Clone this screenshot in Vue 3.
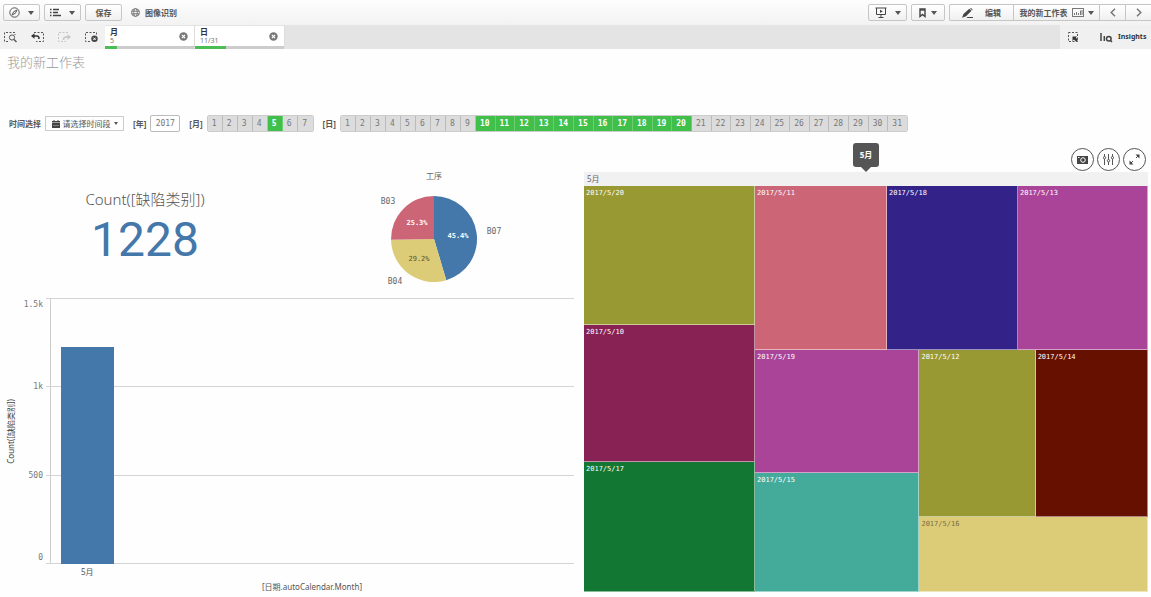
<script setup>
const months = [1, 2, 3, 4, 5, 6, 7]
const days = Array.from({ length: 31 }, (_, i) => i + 1)
const fields = [
  { name: '月', value: '5', share: 14 },
  { name: '日', value: '11/31', share: 35 },
]
const ticks = [
  { label: '1.5k', at: 100 },
  { label: '1k', at: 66.67 },
  { label: '500', at: 33.33 },
  { label: '0', at: 0 },
]
const barHeight = (1228 / 1500) * 100

const slices = [
  { name: 'B07', share: 45.4, color: '#4477aa', lx: 204, ly: 62, px: 168, py: 66, ink: '#fff', bold: true },
  { name: 'B04', share: 29.3, color: '#ddcc77', lx: 105, ly: 112, px: 129, py: 89, ink: '#5c5230', bold: false },
  { name: 'B03', share: 25.3, color: '#cc6677', lx: 98, ly: 32, px: 127, py: 53, ink: '#fff', bold: true },
]
const percent = { B07: '45.4%', B04: '29.2%', B03: '25.3%' }
const cx = 144
const cy = 67
const r = 43
let acc = 0
for (const s of slices) {
  const a0 = (acc / 100) * Math.PI * 2
  acc += s.share
  const a1 = (acc / 100) * Math.PI * 2
  const p = (a) => `${(cx + r * Math.sin(a)).toFixed(2)} ${(cy - r * Math.cos(a)).toFixed(2)}`
  s.d = `M${cx} ${cy}L${p(a0)}A${r} ${r} 0 0 1 ${p(a1)}Z`
}
</script>

<template>
  <div class="page">
    <header class="topbar">
      <button class="btn w-s" aria-label="导航">
        <svg width="11" height="11" viewBox="0 0 11 11" fill="none" stroke="#555"><circle cx="5.5" cy="5.5" r="4.7" /><path d="M8 3 6.3 6.3 3 8 4.7 4.7Z" /></svg>
        <i class="caret"></i>
      </button>
      <button class="btn w-s" aria-label="菜单">
        <svg width="11" height="9" viewBox="0 0 11 9" stroke="#444" stroke-width="1.3"><path d="M0 1.5H1.5M3 1.5H9M0 4.5H1.5M3 4.5H8M0 7.5H1.5M3 7.5H11" /></svg>
        <i class="caret"></i>
      </button>
      <button class="btn w-s">保存</button>
      <div class="app-name">
        <svg width="9" height="9" viewBox="0 0 9 9" fill="none" stroke="#777"><circle cx="4.5" cy="4.5" r="3.9" /><ellipse cx="4.5" cy="4.5" rx="1.8" ry="3.9" /><path d="M.5 3.2H8.5M.5 5.8H8.5" /></svg>
        <span>图像识别</span>
      </div>
      <div class="spacer"></div>
      <button class="btn w-m" aria-label="演示">
        <svg width="12" height="11" viewBox="0 0 12 11" fill="none" stroke="#444"><path d="M.5 1H11.5M1.5 1V7.5H10.5V1M6 7.5V10M3.5 10.5H8.5" /><path d="M5 2.7 7.8 4.3 5 6Z" fill="#444" stroke="none" /></svg>
        <i class="caret"></i>
      </button>
      <button class="btn w-b" aria-label="书签">
        <svg width="7" height="10" viewBox="0 0 7 10" fill="none" stroke="#444" stroke-width="1.4"><path d="M1 1H6V8.5L3.5 6.5 1 8.5Z" /><path d="M1 2H6" /></svg>
        <i class="caret"></i>
      </button>
      <div class="group">
        <button class="seg edit">
          <svg width="11" height="10" viewBox="0 0 11 10" fill="#444"><path d="M7.300 .8 9.500 2.800 4 8.300 0 9.800 1.500 6ZM8 .2 9 0 10.700 1.500 10.200 2.200ZM5.500 9H11V10H4.500Z" /></svg>
          <span>编辑</span>
        </button>
        <button class="seg sheet">
          <span>我的新工作表</span>
          <svg width="12" height="9" viewBox="0 0 12 9" fill="none" stroke="#777"><rect x=".5" y=".5" width="11" height="8" /><path d="M2.5 7V5M4.5 7V4M6.5 7V5M8.5 7V2.5M10 7V2" /></svg>
          <i class="caret"></i>
        </button>
        <button class="seg nav" aria-label="上一个"><svg width="6" height="9" viewBox="0 0 6 9" fill="none" stroke="#777" stroke-width="1.5"><path d="M5 .7 1.2 4.5 5 8.3" /></svg></button>
        <button class="seg nav" aria-label="下一个"><svg width="6" height="9" viewBox="0 0 6 9" fill="none" stroke="#777" stroke-width="1.5"><path d="M1 .7 4.8 4.5 1 8.3" /></svg></button>
      </div>
    </header>

    <section class="selbar">
      <div class="tools">
        <button class="tool" aria-label="智能搜索"><svg width="13" height="12" viewBox="0 0 13 12" fill="none" stroke="#555"><path d="M4 10.5H.5V1.500H11V4" stroke-dasharray="2 1.500" /><circle cx="8" cy="6.500" r="2.600" /><path d="M10 8.500 12.500 11" stroke-width="1.400" /></svg></button>
        <button class="tool" aria-label="后退"><svg width="13" height="12" viewBox="0 0 13 12" fill="none" stroke="#555"><path d="M3 1.500H12.500V10.500H5" stroke-dasharray="2 1.500" /><path d="M2.500 5H6Q8 5 8 8" stroke="#333" stroke-width="1.500" /><path d="M0 5 3.500 2.300V7.700Z" fill="#333" stroke="none" /></svg></button>
        <button class="tool off" aria-label="前进"><svg width="13" height="12" viewBox="0 0 13 12" fill="none" stroke="#777"><path d="M10 1.500H.5V10.500H8" stroke-dasharray="2 1.500" /><path d="M10.500 6H8Q5.500 6 5.500 9" stroke-width="1.400" /><path d="M13 6 9.500 3.300V8.700Z" fill="#777" stroke="none" /></svg></button>
        <button class="tool" aria-label="清除所有选择"><svg width="13" height="12" viewBox="0 0 13 12" fill="none" stroke="#555"><path d="M5 10.500H.5V1.500H11.500V4" stroke-dasharray="2 1.500" /><circle cx="9.500" cy="7.800" r="3.200" fill="#444" stroke="none" /><path d="M8.300 6.600 10.700 9M10.700 6.600 8.300 9" stroke="#fff" /></svg></button>
      </div>
      <div v-for="f in fields" :key="f.name" class="field">
        <div class="field-body">
          <div class="field-text"><b>{{ f.name }}</b><span>{{ f.value }}</span></div>
          <button class="clear" :aria-label="'清除 ' + f.name"><svg width="9" height="9" viewBox="0 0 9 9"><circle cx="4.500" cy="4.500" r="4.200" fill="#777" /><path d="M2.900 2.900 6.100 6.100M6.100 2.900 2.900 6.100" stroke="#fff" stroke-width="1.300" /></svg></button>
        </div>
        <div class="meter"><div :style="{ width: f.share + '%' }"></div></div>
      </div>
      <div class="spacer"></div>
      <div class="insights">
        <button class="tool" aria-label="选择工具"><svg width="11" height="11" viewBox="0 0 11 11" fill="none" stroke="#555"><rect x=".5" y=".5" width="9" height="9" stroke-dasharray="2 1.500" /><path d="M4.500 4.500H9L7.800 5.800 10 8 8 9.500 6 7.500 4.500 9Z" fill="#333" stroke="none" /></svg></button>
        <button class="ins-btn"><svg width="13" height="11" viewBox="0 0 13 11" fill="none" stroke="#444" stroke-width="1.500"><path d="M1 1V9M4.300 4V9" /><circle cx="8.800" cy="6.800" r="2.300" /><path d="M10.500 8.500 12 10" /></svg><span>Insights</span></button>
      </div>
    </section>

    <h1 class="title">我的新工作表</h1>

    <section class="filters">
      <b>时间选择</b>
      <button class="range">
        <svg width="8" height="8" viewBox="0 0 8 8" fill="#444"><path d="M0 1H8V2.500H0ZM0 3H8V8H0ZM1.500 0H2.500V1H1.500ZM5.500 0H6.500V1H5.500Z" /><path d="M1 5.500H7" stroke="#999" stroke-width=".7" /></svg>
        <span>请选择时间段</span><i class="caret small"></i>
      </button>
      <b>[年]</b>
      <button class="year">2017</button>
      <b>[月]</b>
      <div class="cells"><button v-for="m in months" :key="m" :class="{ on: m === 5 }">{{ m }}</button></div>
      <b>[日]</b>
      <div class="cells"><button v-for="d in days" :key="d" :class="{ on: d > 9 && d < 21 }">{{ d }}</button></div>
    </section>

    <main class="board">
      <div class="left">
        <div class="summary">
          <div class="kpi"><div class="kpi-name">Count([缺陷类别])</div><div class="kpi-value">1228</div></div>
          <svg class="pie" viewBox="0 0 284 124">
            <text x="144" y="7" text-anchor="middle" class="lab">工序</text>
            <g v-for="s in slices" :key="s.name">
              <path :d="s.d" :fill="s.color" />
              <text :x="s.lx" :y="s.ly" text-anchor="middle" class="lab">{{ s.name }}</text>
              <text :x="s.px" :y="s.py" text-anchor="middle" class="pct" :class="{ strong: s.bold }" :fill="s.ink">{{ percent[s.name] }}</text>
            </g>
          </svg>
        </div>
        <div class="chart">
          <div class="y-title"><span>Count([缺陷类别])</span></div>
          <div class="y-axis">
            <span v-for="t in ticks" :key="t.label" :class="{ top: t.at === 100, bottom: t.at === 0 }" :style="{ bottom: t.at + '%' }">{{ t.label }}</span>
          </div>
          <div class="plot">
            <div v-for="t in ticks" :key="t.label" class="line" :style="{ bottom: t.at + '%' }"></div>
            <div class="bar" :style="{ height: barHeight + '%' }"></div>
          </div>
          <div class="x-label">5月</div>
          <div class="x-title">[日期.autoCalendar.Month]</div>
        </div>
      </div>

      <div class="right">
        <div class="actions">
          <button aria-label="快照"><svg width="11" height="9" viewBox="0 0 11 9"><path d="M0 1H11V9H0Z" fill="#444" /><circle cx="6" cy="5" r="2.300" fill="#444" stroke="#fff" /><path d="M1 2.500H2.500" stroke="#fff" /></svg></button>
          <button aria-label="探索"><svg width="11" height="11" viewBox="0 0 11 11" fill="none" stroke="#555"><path d="M1.500 0V2.500M1.500 5V11M5.500 0V5.500M5.500 8V11M9.500 0V2.500M9.500 5V11" /><circle cx="1.500" cy="3.700" r="1.200" /><circle cx="5.500" cy="6.700" r="1.200" /><circle cx="9.500" cy="3.700" r="1.200" /></svg></button>
          <button aria-label="全屏"><svg width="11" height="11" viewBox="0 0 11 11" fill="#444"><path d="M6.500.5H10.500V4.500ZM.5 6.500V10.500H4.500Z" /><path d="M9.500 1.500 7 4M1.500 9.500 4 7" stroke="#444" /></svg></button>
        </div>
        <div class="tip">5月</div>
        <div class="tree-head">5月</div>
        <div class="tree">
          <div class="col f171">
            <div class="leaf olive f139">2017/5/20</div>
            <div class="leaf wine f137">2017/5/10</div>
            <div class="leaf green f130">2017/5/17</div>
          </div>
          <div class="col f393">
            <div class="row f164">
              <div class="leaf pink f132">2017/5/11</div>
              <div class="leaf indigo f131">2017/5/18</div>
              <div class="leaf purple f130">2017/5/13</div>
            </div>
            <div class="row f242">
              <div class="col f164">
                <div class="leaf purple f123">2017/5/19</div>
                <div class="leaf teal f119">2017/5/15</div>
              </div>
              <div class="col f228">
                <div class="row f167">
                  <div class="leaf olive f116">2017/5/12</div>
                  <div class="leaf brown f112">2017/5/14</div>
                </div>
                <div class="leaf sand f70">2017/5/16</div>
              </div>
            </div>
          </div>
        </div>
      </div>
    </main>
  </div>
</template>

<style>
body { background: #fefefe; }
</style>

<style scoped>
.page {
  --mono: "DejaVu Sans Mono", "Noto Sans CJK SC", monospace;
  display: flex; flex-direction: column; min-height: 100vh; box-sizing: border-box; padding-bottom: 5px;
  font: 8px/12px "Noto Sans", "Noto Sans CJK SC", sans-serif; color: #555; overflow: hidden;
}
.page * { box-sizing: border-box; }
button { font: inherit; color: inherit; margin: 0; padding: 0; border: 0; background: none; display: flex; align-items: center; justify-content: center; }
svg { display: block; flex: none; }
.spacer { flex: 1; }
.caret { border: 3px solid transparent; border-top: 4px solid #555; border-bottom: 0; }
.caret.small { border-width: 2px; border-top-width: 3px; border-bottom: 0; }

.topbar { display: flex; align-items: center; gap: 4px; height: 25px; padding-left: 3px; background: linear-gradient(#fefefe, #f2f2f2); font-weight: 700; color: #555; }
.btn { height: 17px; gap: 8px; border: 1px solid #c6c6c6; border-radius: 2px; background: linear-gradient(#fff, #f0f0f0); }
.w-s { width: 37px; }
.w-m { width: 39px; }
.w-b { width: 34px; gap: 5px; }
.app-name { display: flex; align-items: center; gap: 5px; margin-left: 5px; }
.group { display: flex; height: 17px; border: 1px solid #c6c6c6; border-right: 0; border-radius: 2px 0 0 2px; background: linear-gradient(#fff, #f0f0f0); }
.seg + .seg { border-left: 1px solid #c6c6c6; }
.edit { width: 63px; gap: 12px; }
.sheet { width: 86px; gap: 4px; }
.nav { width: 26px; }

.selbar { display: flex; height: 24px; background: #e5e4e5; }
.tools { display: flex; align-items: center; gap: 14px; width: 105px; padding-left: 4px; background: #f1f1f1; }
.off { opacity: .35; }
.field { width: 90px; display: flex; flex-direction: column; padding-top: 1px; border-right: 1px solid #ddd; }
.field-body { flex: 1; display: flex; align-items: center; justify-content: space-between; padding: 0 6px 0 5px; background: #fff; }
.field-text { display: flex; flex-direction: column; line-height: 9px; }
.field-text b { color: #333; }
.field-text span { font-family: "Noto Sans", sans-serif; font-size: 7px; color: #777; }
.meter { height: 3px; background: #ccc; }
.meter div { height: 3px; background: #4bbd55; }
.insights { display: flex; align-items: center; gap: 21px; width: 91px; padding-left: 8px; background: #f1f0f1; }
.ins-btn { gap: 5px; font-weight: 700; font-size: 7px; color: #333; }

.title { margin: 0; padding: 4px 7px 0; height: 66px; font-size: 13px; line-height: 18px; font-weight: 300; color: #999; }

.filters { display: flex; align-items: center; height: 17px; padding-left: 9px; white-space: nowrap; }
.filters b { color: #555; margin-right: 4px; }
.filters > button, .cells { margin-right: 9px; }
.range { height: 15px; width: 79px; gap: 3px; border: 1px solid #ccc; color: #555; }
.year { height: 17px; width: 30px; border: 1px solid #bbb; border-radius: 2px; font-family: var(--mono); color: #777; }
.cells { display: flex; height: 17px; border: 1px solid #ccc; border-radius: 2px; overflow: hidden; font-family: var(--mono); }
.cells button { min-width: 15px; padding: 0 5px 0 4px; border-right: 1px solid #bbb; background: #dddcdd; color: #777; }
.cells button:last-child { border-right: 0; }
.cells .on { background: #40bf4b; border-right-color: #6bcf72; color: #fff; font-weight: 700; }

.board { flex: 1; display: grid; grid-template-columns: 574fr 564fr; gap: 10px; padding: 40px 3px 0 0; }
.left { display: flex; flex-direction: column; }
.summary { display: grid; grid-template-columns: 290fr 284fr; height: 127px; }
.kpi { text-align: center; padding-top: 16px; }
.kpi-name { font-size: 15px; line-height: 22px; font-weight: 300; color: #555; }
.kpi-value { font-family: Roboto, sans-serif; font-size: 48px; line-height: 60px; color: #4477aa; }
.pie { width: 100%; height: 124px; }
.lab { font-family: var(--mono); font-size: 8px; fill: #666; }
.pct { font-family: var(--mono); font-size: 7px; }
.strong { font-weight: 700; }

.chart { flex: 1; display: grid; grid-template-columns: 22px 28px 1fr; grid-template-rows: 1fr 17px 11px; }
.y-title { display: flex; align-items: center; justify-content: center; grid-row: 1; }
.y-title span { writing-mode: vertical-rl; text-orientation: sideways; transform: rotate(180deg); white-space: nowrap; font-size: 8px; color: #444; }
.y-axis { position: relative; font-family: var(--mono); }
.y-axis span { position: absolute; right: 7px; transform: translateY(50%); color: #777; }
.y-axis .top { transform: translateY(100%); }
.y-axis .bottom { transform: none; }
.plot { position: relative; border-left: 1px solid #ccc; }
.line { position: absolute; left: -5px; right: 0; height: 1px; background: #d4d3d8; }
.bar { position: absolute; bottom: 0; left: 2%; width: 10%; background: #4477aa; }
.x-label { grid-column: 3; padding-left: 31px; font-size: 8px; line-height: 16px; }
.x-title { grid-column: 3; text-align: center; line-height: 12px; }

.right { position: relative; display: flex; flex-direction: column; }
.actions { position: absolute; right: 2px; top: -24px; display: flex; gap: 3px; }
.actions button { width: 23px; height: 23px; border: 1px solid #555; border-radius: 50%; background: #fff; }
.tip { position: absolute; left: 50%; top: -29px; transform: translateX(-50%); width: 26px; height: 24px; border-radius: 3px; background: #555; color: #fff; font-weight: 700; line-height: 23px; text-align: center; }
.tip::after { content: ""; position: absolute; left: 7px; top: 23px; border: 6px solid transparent; border-top-color: #555; border-bottom: 0; }
.tree-head { height: 14px; padding-left: 3px; background: #f2f1f2; line-height: 14px; color: #666; }
.tree { flex: 1; display: flex; }
.col { display: flex; flex-direction: column; flex-basis: 0; min-width: 0; }
.row { display: flex; flex-basis: 0; min-height: 0; }
.leaf { flex-basis: 0; padding: 2px; border: solid rgba(255, 255, 255, .5); border-width: 0 1px 1px 0; font-family: var(--mono); font-size: 7px; line-height: 11px; color: #fff; }
.f171 { flex-grow: 171; } .f393 { flex-grow: 393; }
.f139 { flex-grow: 139; } .f137 { flex-grow: 137; } .f130 { flex-grow: 130; }
.f242 { flex-grow: 242; } .f132 { flex-grow: 132; } .f131 { flex-grow: 131; }
.f164 { flex-grow: 164; } .f228 { flex-grow: 228; } .f123 { flex-grow: 123; } .f119 { flex-grow: 119; }
.f167 { flex-grow: 167; } .f70 { flex-grow: 70; } .f116 { flex-grow: 116; } .f112 { flex-grow: 112; }
.olive { background-color: #999933; } .wine { background-color: #882255; } .green { background-color: #117733; }
.pink { background-color: #cc6677; } .indigo { background-color: #332288; } .purple { background-color: #aa4499; }
.teal { background-color: #44aa99; } .brown { background-color: #661100; } .sand { background-color: #ddcc77; color: #776d45; }
</style>
